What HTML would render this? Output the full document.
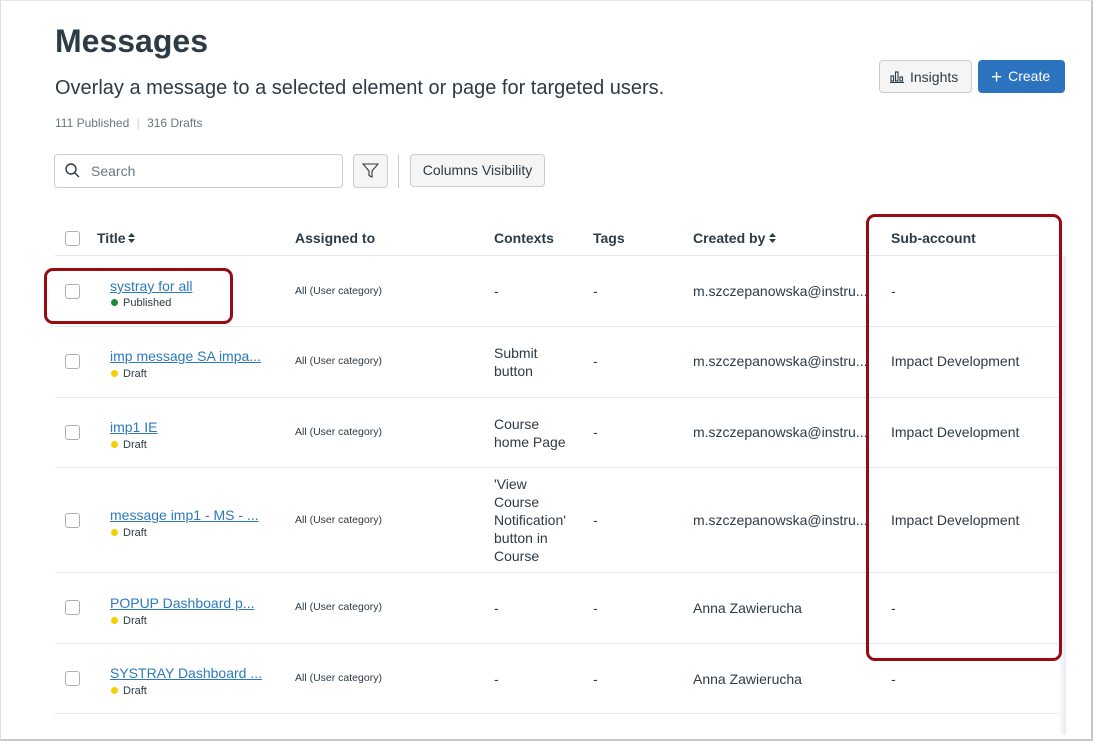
<!DOCTYPE html>
<html><head><meta charset="utf-8"><style>
*{box-sizing:border-box;margin:0;padding:0}
body{width:1094px;height:743px;background:#fff;font-family:"Liberation Sans",sans-serif;color:#2d3b45;position:relative;overflow:hidden}
.a{position:absolute;white-space:nowrap}
.frame{position:absolute;left:0;top:0;width:1093px;height:741px;border-right:2px solid #c8c8c8;border-bottom:2px solid #c8c8c8;border-left:1px solid #ddd;border-top:1px solid #e5e5e5}
.cb{position:absolute;left:65px;width:15px;height:15px;border:1px solid #a8b0b6;border-radius:3px;background:#fff}
.hd{position:absolute;top:230px;font-size:14px;font-weight:bold;color:#2d3b45}
.line{position:absolute;left:55px;width:1003px;height:1px;background:#e6e6e6}
.link{position:absolute;left:110px;font-size:14px;color:#2b7abc;text-decoration:underline}
.st{position:absolute;left:111px;font-size:11px;color:#2d3b45}
.st i{display:inline-block;width:7px;height:7px;border-radius:50%;margin-right:5px;vertical-align:0}
.sm{position:absolute;left:295px;font-size:10.5px}
.t{position:absolute;font-size:14px;line-height:18px;color:#2d3b45}
.red{position:absolute;border:3px solid #990b10;border-radius:9px}
.srt{display:inline-block;vertical-align:0;margin-left:2px}
</style></head><body>
<div class="frame"></div>
<div class="a" style="left:55px;top:23px;font-size:32px;font-weight:bold;color:#2d3b45">Messages</div>
<div class="a" style="left:55px;top:77px;font-size:20px;color:#2d3b45">Overlay a message to a selected element or page for targeted users.</div>
<div class="a" style="left:55px;top:116px;font-size:12px;color:#6b7780">111 Published <span style="color:#ccc;margin:0 4px">|</span> 316 Drafts</div>

<div class="a" style="left:879px;top:60px;width:93px;height:33px;border:1px solid #c7cdd1;border-radius:4px;background:#f5f5f5;font-size:14px;line-height:32px;padding-left:10px">
<svg width="14" height="12" style="vertical-align:-1px;margin-right:6px" viewBox="0 0 14 12" fill="none" stroke="#2d3b45" stroke-width="1.1"><rect x="1" y="5" width="2.5" height="5"/><rect x="5.5" y="1" width="2.5" height="9"/><rect x="10" y="6" width="2.5" height="4"/><line x1="0" y1="11.5" x2="14" y2="11.5"/></svg>Insights</div>
<div class="a" style="left:978px;top:60px;width:87px;height:33px;border-radius:4px;background:#2b72bf;color:#fff;font-size:14px;line-height:33px;padding-left:13px"><span style="font-size:19px;vertical-align:-2px;margin-right:6px">+</span>Create</div>

<div class="a" style="left:54px;top:154px;width:289px;height:34px;border:1px solid #c7cdd1;border-radius:4px;font-size:14px;line-height:32px;padding-left:36px;color:#6b7780">Search</div>
<svg class="a" style="left:65px;top:163px" width="15" height="15" viewBox="0 0 15 15" fill="none" stroke="#2d3b45" stroke-width="1.4"><circle cx="6" cy="6" r="5"/><line x1="9.7" y1="9.7" x2="14" y2="14"/></svg>
<div class="a" style="left:353px;top:154px;width:35px;height:34px;border:1px solid #c7cdd1;border-radius:4px;background:#f5f5f5"></div>
<svg class="a" style="left:362px;top:162px" width="17" height="17" viewBox="0 0 17 17" fill="none" stroke="#2d3b45" stroke-width="1.1"><path d="M1 2h15l-6 7v6l-3-1.5V9z"/></svg>
<div class="a" style="left:398px;top:154px;width:1px;height:34px;background:#c7cdd1"></div>
<div class="a" style="left:410px;top:154px;width:135px;height:33px;border:1px solid #c7cdd1;border-radius:4px;background:#f5f5f5;font-size:14px;line-height:31px;text-align:center">Columns Visibility</div>

<div class="cb" style="top:231px"></div>
<div class="hd" style="left:97px">Title<svg class="srt" width="7" height="10" viewBox="0 0 7 10" fill="#2d3b45"><path d="M3.5 0L7 4H0z M3.5 10L7 6H0z"/></svg></div>
<div class="hd" style="left:295px">Assigned to</div>
<div class="hd" style="left:494px">Contexts</div>
<div class="hd" style="left:593px">Tags</div>
<div class="hd" style="left:693px">Created by<svg class="srt" width="7" height="10" viewBox="0 0 7 10" fill="#2d3b45" style="margin-left:4px"><path d="M3.5 0L7 4H0z M3.5 10L7 6H0z"/></svg></div>
<div class="hd" style="left:891px">Sub-account</div>
<div class="line" style="top:255px"></div>

<div class="cb" style="top:284px"></div>
<div class="link" style="top:278px">systray for all</div>
<div class="st" style="top:297px"><i style="background:#1c8a3a"></i>Published</div>
<div class="sm" style="top:285px">All (User category)</div>
<div class="t" style="left:494px;top:282px">-</div>
<div class="t" style="left:593px;top:282px">-</div>
<div class="t" style="left:693px;top:282px">m.szczepanowska@instru...</div>
<div class="t" style="left:891px;top:282px">-</div>
<div class="line" style="top:326px"></div>

<div class="cb" style="top:354px"></div>
<div class="link" style="top:348px">imp message SA impa...</div>
<div class="st" style="top:368px"><i style="background:#f5d000"></i>Draft</div>
<div class="sm" style="top:355px">All (User category)</div>
<div class="t" style="left:494px;top:344px">Submit<br>button</div>
<div class="t" style="left:593px;top:352px">-</div>
<div class="t" style="left:693px;top:352px">m.szczepanowska@instru...</div>
<div class="t" style="left:891px;top:352px">Impact Development</div>
<div class="line" style="top:397px"></div>

<div class="cb" style="top:425px"></div>
<div class="link" style="top:419px">imp1 IE</div>
<div class="st" style="top:439px"><i style="background:#f5d000"></i>Draft</div>
<div class="sm" style="top:426px">All (User category)</div>
<div class="t" style="left:494px;top:415px">Course<br>home Page</div>
<div class="t" style="left:593px;top:423px">-</div>
<div class="t" style="left:693px;top:423px">m.szczepanowska@instru...</div>
<div class="t" style="left:891px;top:423px">Impact Development</div>
<div class="line" style="top:467px"></div>

<div class="cb" style="top:513px"></div>
<div class="link" style="top:507px">message imp1 - MS - ...</div>
<div class="st" style="top:527px"><i style="background:#f5d000"></i>Draft</div>
<div class="sm" style="top:514px">All (User category)</div>
<div class="t" style="left:494px;top:475px">'View<br>Course<br>Notification'<br>button in<br>Course</div>
<div class="t" style="left:593px;top:511px">-</div>
<div class="t" style="left:693px;top:511px">m.szczepanowska@instru...</div>
<div class="t" style="left:891px;top:511px">Impact Development</div>
<div class="line" style="top:572px"></div>

<div class="cb" style="top:600px"></div>
<div class="link" style="top:595px">POPUP Dashboard p...</div>
<div class="st" style="top:615px"><i style="background:#f5d000"></i>Draft</div>
<div class="sm" style="top:601px">All (User category)</div>
<div class="t" style="left:494px;top:599px">-</div>
<div class="t" style="left:593px;top:599px">-</div>
<div class="t" style="left:693px;top:599px">Anna Zawierucha</div>
<div class="t" style="left:891px;top:599px">-</div>
<div class="line" style="top:643px"></div>

<div class="cb" style="top:671px"></div>
<div class="link" style="top:665px">SYSTRAY Dashboard ...</div>
<div class="st" style="top:685px"><i style="background:#f5d000"></i>Draft</div>
<div class="sm" style="top:672px">All (User category)</div>
<div class="t" style="left:494px;top:670px">-</div>
<div class="t" style="left:593px;top:670px">-</div>
<div class="t" style="left:693px;top:670px">Anna Zawierucha</div>
<div class="t" style="left:891px;top:670px">-</div>
<div class="line" style="top:713px"></div>

<div class="a" style="left:1058px;top:256px;width:8px;height:479px;background:linear-gradient(90deg,#fff,#e8ebf0)"></div>

<div class="red" style="left:44px;top:268px;width:189px;height:56px"></div>
<div class="red" style="left:866px;top:214px;width:196px;height:447px"></div>
</body></html>
